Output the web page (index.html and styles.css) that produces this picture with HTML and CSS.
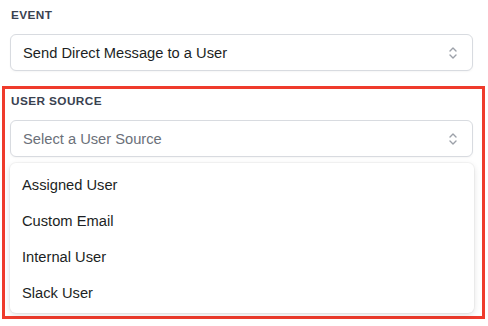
FILE: index.html
```html
<!DOCTYPE html>
<html lang="en">
<head>
  <meta charset="UTF-8">
  <title>Workflow Action</title>
  <link rel="stylesheet" href="styles.css">
</head>
<body>
<div class="form">
  <div class="field">
    <p class="label">Event</p>
    <div class="select">
      <span class="value">Send Direct Message to a User</span>
      <svg class="chevrons" width="10" height="14" viewBox="0 0 10 14" fill="none" stroke="currentColor" stroke-width="1.4" stroke-linecap="round" stroke-linejoin="round">
        <path d="M2 5 L5 2 L8 5" />
        <path d="M2 9 L5 12 L8 9" />
      </svg>
    </div>
  </div>

  <div class="field highlight">
    <p class="label">User Source</p>
    <div class="select">
      <span class="value placeholder">Select a User Source</span>
      <svg class="chevrons" width="10" height="14" viewBox="0 0 10 14" fill="none" stroke="currentColor" stroke-width="1.4" stroke-linecap="round" stroke-linejoin="round">
        <path d="M2 5 L5 2 L8 5" />
        <path d="M2 9 L5 12 L8 9" />
      </svg>
    </div>
    <ul class="menu">
      <li>Assigned User</li>
      <li>Custom Email</li>
      <li>Internal User</li>
      <li>Slack User</li>
    </ul>
  </div>
</div>
</body>
</html>
```

FILE: styles.css
```css
body {
  margin: 0;
  background: #ffffff;
  font-family: 'Liberation Sans', Arial, sans-serif;
  color: #1f2328;
  -webkit-font-smoothing: antialiased;
}

.form {
  display: flex;
  flex-direction: column;
  width: 488px;
}

.field {
  padding: 8px 15px 0 10px;
}

.label {
  margin: 0 0 12px 1px;
  font-size: 11.8px;
  font-weight: bold;
  letter-spacing: 0.4px;
  text-transform: uppercase;
  color: #394150;
  line-height: 14px;
}

.select {
  display: flex;
  align-items: center;
  justify-content: space-between;
  height: 35px;
  padding: 0 12px 0 12px;
  border: 1px solid #d8dbe0;
  border-radius: 6px;
  background: #ffffff;
  box-shadow: 0 1px 2px rgba(0, 0, 0, 0.04);
}

.value {
  font-size: 14.7px;
  color: #1c1f24;
}

.placeholder {
  color: #6b7079;
}

.chevrons {
  color: #9ca1a9;
  margin-right: 2px;
}

.highlight {
  margin: 15px 3px 0 2px;
  padding: 5px 9px 3px 5px;
  border: 3px solid #ef3b2c;
}

.menu {
  margin: 6px -1px 0 0;
  padding: 4px 0 2px;
  list-style: none;
  background: #ffffff;
  border-radius: 6px;
  box-shadow: 0 2px 6px rgba(0, 0, 0, 0.12), 0 0 0 1px rgba(0, 0, 0, 0.03);
}

.menu li {
  padding: 0 12px;
  height: 36px;
  line-height: 36px;
  font-size: 14.7px;
  color: #1c1f24;
}
```
